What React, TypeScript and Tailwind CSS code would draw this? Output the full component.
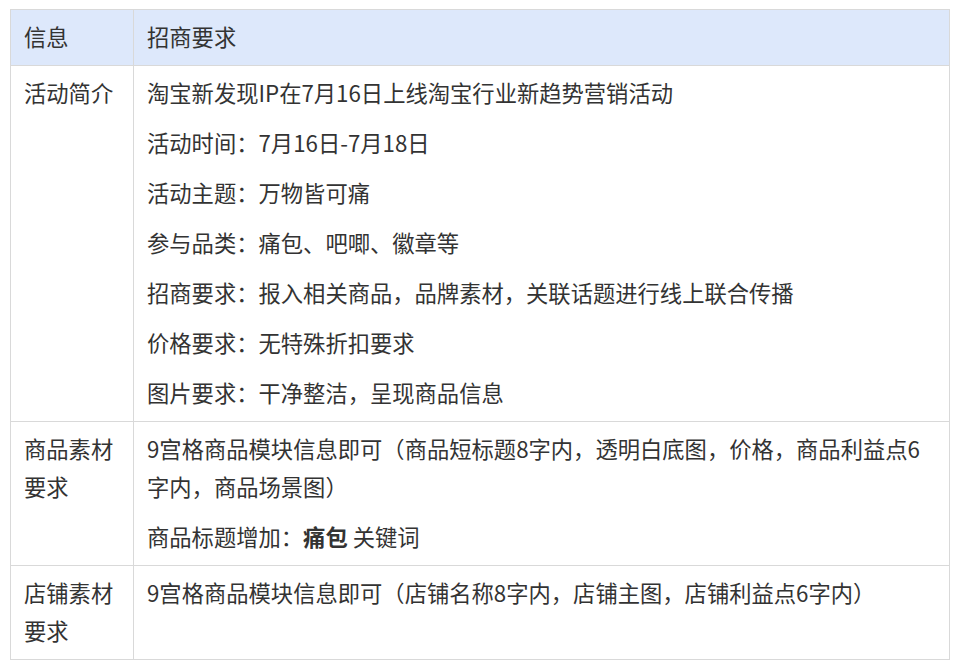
import React from "react";

const rows1 = [
  "淘宝新发现IP在7月16日上线淘宝行业新趋势营销活动",
  "活动时间：7月16日-7月18日",
  "活动主题：万物皆可痛",
  "参与品类：痛包、吧唧、徽章等",
  "招商要求：报入相关商品，品牌素材，关联话题进行线上联合传播",
  "价格要求：无特殊折扣要求",
  "图片要求：干净整洁，呈现商品信息",
];

export default function App() {
  const cellL = "border border-[#d9d9d9] align-top pl-[13px] pr-[13px] pt-[7px] pb-[10px]";
  const cellR = "border border-[#d9d9d9] align-top pl-[13px] pr-[13px] pt-[7px] pb-[10px]";
  return (
    <div
      className="bg-white w-[958px] h-[672px] pt-[9px] pl-[10px] text-[#333] text-[22.3px] leading-[38px]"
      style={{ fontFamily: '"Noto Sans CJK SC", "Noto Sans", sans-serif' }}
    >
      <table className="w-[940px] border-collapse table-fixed">
        <colgroup>
          <col className="w-[123px]" />
          <col />
        </colgroup>
        <thead>
          <tr className="bg-[#dde8fb]">
            <th className={cellL + " font-normal text-left"}>信息</th>
            <th className={cellR + " font-normal text-left"}>招商要求</th>
          </tr>
        </thead>
        <tbody>
          <tr>
            <td className={cellL}>活动简介</td>
            <td className={cellR}>
              <div className="flex flex-col gap-[12px]">
                {rows1.map((t) => (
                  <p key={t}>{t}</p>
                ))}
              </div>
            </td>
          </tr>
          <tr>
            <td className={cellL}>商品素材要求</td>
            <td className={cellR}>
              <div className="flex flex-col gap-[12px]">
                <p>9宫格商品模块信息即可（商品短标题8字内，透明白底图，价格，商品利益点6字内，商品场景图）</p>
                <p>
                  商品标题增加：<span className="font-bold">痛包</span> 关键词
                </p>
              </div>
            </td>
          </tr>
          <tr>
            <td className={cellL}>店铺素材要求</td>
            <td className={cellR}>
              <p>9宫格商品模块信息即可（店铺名称8字内，店铺主图，店铺利益点6字内）</p>
            </td>
          </tr>
        </tbody>
      </table>
    </div>
  );
}
